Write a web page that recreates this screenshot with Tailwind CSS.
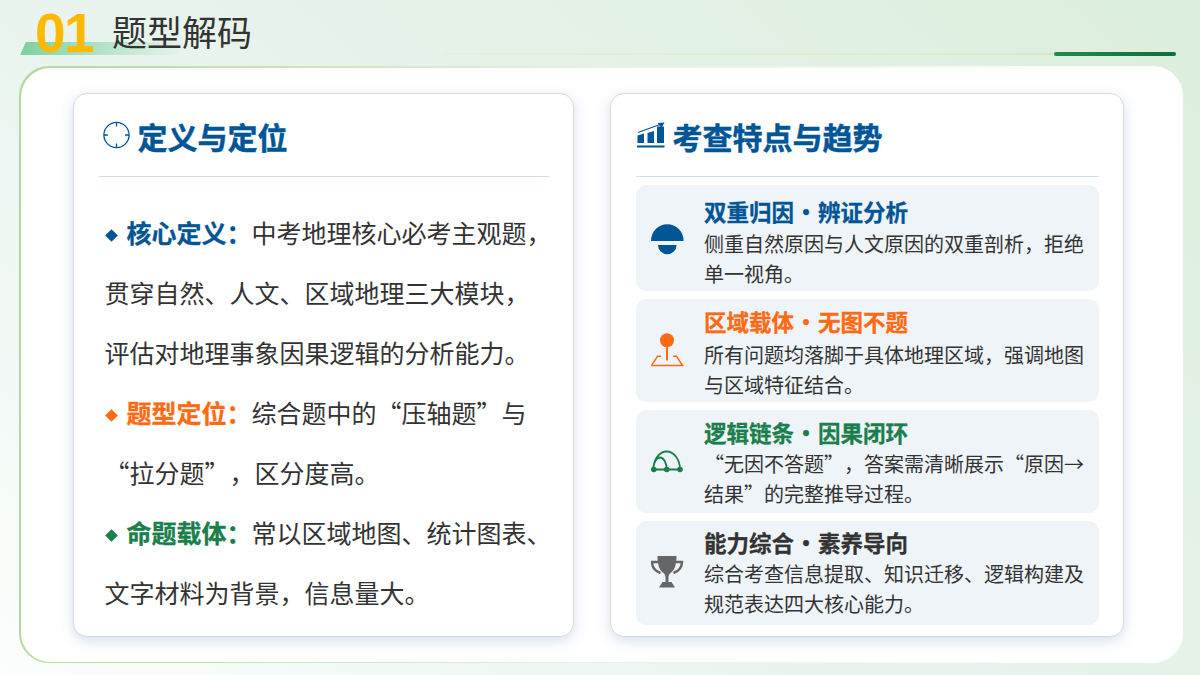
<!DOCTYPE html>
<html lang="zh-CN">
<head>
    <meta charset="UTF-8">
    <title>题型解码</title>
    <script src="https://cdn.jsdelivr.net/npm/@tailwindcss/browser@4"></script>
</head>
<body class="w-[1200px] h-[675px] overflow-hidden bg-[linear-gradient(40deg,#fbfefc_0%,#e9f4ef_40%,#dceedc_100%)] font-['Noto_Sans_CJK_SC','Noto_Sans',sans-serif] text-[#333333] [text-spacing-trim:space-all]">
    <!-- 顶部标题 -->
    <header class="relative h-[66px]">
        <div class="absolute left-[23px] top-[42px] w-[160px] h-[13px] -skew-x-[24deg] bg-gradient-to-r from-[#7fd1a0] to-transparent"></div>
        <div class="absolute left-[445px] top-[53px] w-[609px] h-[2px] bg-gradient-to-r from-[#e4f0dc] to-[#d6ebc8]"></div>
        <div class="absolute left-[1054px] top-[52px] w-[122px] h-[4px] rounded-full bg-gradient-to-r from-[#1f8a4c] to-[#0e6f3c]"></div>
        <div class="relative flex items-start pl-[35px]">
            <span class="font-['Liberation_Sans',sans-serif] font-bold text-[55px] tracking-[-0.03em] leading-[66px] text-[#fdb900]">01</span>
            <h1 class="ml-[19px] -mt-[2px] text-[35px] leading-[66px] text-[#333333]">题型解码</h1>
        </div>
    </header>

    <!-- 主面板 -->
    <main class="ml-[19px] w-[1164px] h-[597px] rounded-[30px] p-[1.5px] bg-gradient-to-r from-[#b4d99c] via-[#e8f2e0] to-white">
        <div class="h-full rounded-[29px] bg-white pl-[52.5px] pr-[57.5px] pt-[25.5px] grid grid-cols-[501px_514px] gap-[36px]">

            <!-- 左卡片 -->
            <section class="h-[544px] rounded-[14px] border-[1.5px] border-[#d8dade] bg-white shadow-[0_4px_14px_rgba(30,80,160,0.18)] px-[24.5px]">
                <div class="flex items-center h-[83px] border-b border-[#cfe0ea]">
                    <svg class="ml-[4px] w-[27px] h-[28px]" viewBox="0 0 27 28" fill="none" stroke="#005596" stroke-width="1.3">
                        <circle cx="13.5" cy="14" r="12.6"/>
                        <path d="M13.5 1.400v4M13.5 22.600v4M.9 14h4M22.100 14h4"/>
                    </svg>
                    <h2 class="ml-[8px] mt-[2px] text-[30px] font-bold text-[#005596] [-webkit-text-stroke:0.5px]">定义与定位</h2>
                </div>
                <div class="pt-[25px] pl-[6px] text-[25px] leading-[60px] whitespace-nowrap">
                    <p><span class="inline-block w-[9px] h-[9px] rotate-45 bg-[#005596] ml-[2.5px] mr-[10.5px] align-[3px]"></span><b class="text-[#005596] [-webkit-text-stroke:0.3px]">核心定义：</b><span>中考地理核心必考主观题，</span></p>
                    <p>贯穿自然、人文、区域地理三大模块，</p>
                    <p>评估对地理事象因果逻辑的分析能力。</p>
                    <p><span class="inline-block w-[9px] h-[9px] rotate-45 bg-[#ff6a13] ml-[2.5px] mr-[10.5px] align-[3px]"></span><b class="text-[#ff6a13] [-webkit-text-stroke:0.3px]">题型定位：</b><span>综合题中的“压轴题”与</span></p>
                    <p>“拉分题”，区分度高。</p>
                    <p><span class="inline-block w-[9px] h-[9px] rotate-45 bg-[#1a7f4b] ml-[2.5px] mr-[10.5px] align-[3px]"></span><b class="text-[#1a7f4b] [-webkit-text-stroke:0.3px]">命题载体：</b><span>常以区域地图、统计图表、</span></p>
                    <p>文字材料为背景，信息量大。</p>
                </div>
            </section>

            <!-- 右卡片 -->
            <section class="h-[544px] rounded-[14px] border-[1.5px] border-[#d8dade] bg-white shadow-[0_4px_14px_rgba(30,80,160,0.18)] px-[24.5px]">
                <div class="flex items-center h-[83px] border-b border-[#cfe0ea]">
                    <svg class="ml-[1px] w-[28px] h-[27px]" viewBox="0 0 28 27" fill="#005596">
                        <path d="M1 10.500L23 2.500" fill="none" stroke="#005596" stroke-width="1.200"/>
                        <path d="M20.500 1L27.500 .5 24.500 6z"/>
                        <path d="M.5 13.500L7 11.500V21H.5zM10.500 11L17 9V21H10.500zM20 4.500h7V21h-7zM0 23.500h27.500v2H0z"/>
                    </svg>
                    <h2 class="ml-[8px] mt-[2px] text-[30px] font-bold text-[#005596] [-webkit-text-stroke:0.5px]">考查特点与趋势</h2>
                </div>
                <div class="pt-[8px] flex flex-col gap-[8px]">
                    <div class="h-[106px] rounded-[10px] bg-[#eff4f9] flex items-center">
                        <svg class="ml-[15px] w-[34px] h-[34px] shrink-0" viewBox="0 0 34 34" fill="#005596">
                            <path d="M0 20a16.300 16.800 0 0 1 32.600 0z"/>
                            <path d="M7 24h18.600a9.300 9.300 0 0 1-18.600 0z"/>
                        </svg>
                        <div class="ml-[19.5px] pt-[9px] w-[389px]">
                            <h3 class="mb-[3px] text-[22.5px] leading-[30px] font-bold text-[#005596] [-webkit-text-stroke:0.3px]">双重归因<span class="inline-block w-[24px] text-center">•</span>辨证分析</h3>
                            <p class="text-[20px] leading-[30px]">侧重自然原因与人文原因的双重剖析，拒绝单一视角。</p>
                        </div>
                    </div>
                    <div class="h-[103px] rounded-[10px] bg-[#eff4f9] flex items-center">
                        <svg class="ml-[15px] w-[34px] h-[36px] shrink-0" viewBox="0 0 34 36" fill="none" stroke="#ff6a13" stroke-width="1.500">
                            <circle cx="16" cy="7.200" r="7" fill="#ff6a13" stroke="none"/>
                            <path d="M16 12v15.500" stroke-width="2"/>
                            <path d="M10 23.200H6.500L.5 32.500h31L25.500 23.200H22"/>
                        </svg>
                        <div class="ml-[19.5px] pt-[4px] w-[389px]">
                            <h3 class="mb-[4px] text-[22.5px] leading-[30px] font-bold text-[#ff6a13] [-webkit-text-stroke:0.3px]">区域载体<span class="inline-block w-[24px] text-center">•</span>无图不题</h3>
                            <p class="text-[20px] leading-[30px]">所有问题均落脚于具体地理区域，强调地图与区域特征结合。</p>
                        </div>
                    </div>
                    <div class="h-[103px] rounded-[10px] bg-[#eff4f9] flex items-center">
                        <svg class="ml-[15px] w-[34px] h-[24px] shrink-0" viewBox="0 0 34 24" fill="none" stroke="#1a7f4b" stroke-width="1.800">
                            <path d="M2.300 19.500A13.350 18 0 0 1 29 19.500M2.300 19.500A6.700 12 0 0 1 15.700 19.500M2.300 19.500H29"/>
                            <circle cx="2.800" cy="19.500" r="2.800" fill="#1a7f4b" stroke="none"/>
                            <circle cx="15.700" cy="19.500" r="2.800" fill="#1a7f4b" stroke="none"/>
                            <circle cx="29" cy="19.500" r="2.800" fill="#1a7f4b" stroke="none"/>
                        </svg>
                        <div class="ml-[19.5px] pt-[2px] w-[389px]">
                            <h3 class="mb-[2px] text-[22.5px] leading-[30px] font-bold text-[#1a7f4b] [-webkit-text-stroke:0.3px]">逻辑链条<span class="inline-block w-[24px] text-center">•</span>因果闭环</h3>
                            <p class="text-[20px] leading-[30px]">“无因不答题”，答案需清晰展示“原因→结果”的完整推导过程。</p>
                        </div>
                    </div>
                    <div class="h-[104px] rounded-[10px] bg-[#eff4f9] flex items-center">
                        <svg class="ml-[15px] w-[34px] h-[34px] shrink-0" viewBox="0 0 34 34" fill="#666666">
                            <path d="M6.500 0H25.500C25.500 8 24 14 19.500 17 18 18 17.500 20 17.500 22V26H14.500V22C14.500 20 14 18 12.500 17 8 14 6.500 8 6.500 0z"/>
                            <path d="M11.500 26h9l3.500 5.500H8z"/>
                            <path d="M7 6H1c0 5 3 9 8.500 11M25 6h6c0 5-3 9-8.500 11" fill="none" stroke="#666666" stroke-width="2.400"/>
                        </svg>
                        <div class="ml-[19.5px] w-[389px]">
                            <h3 class="mb-[2px] text-[22.5px] leading-[30px] font-bold text-[#333333] [-webkit-text-stroke:0.3px]">能力综合<span class="inline-block w-[24px] text-center">•</span>素养导向</h3>
                            <p class="text-[20px] leading-[30px]">综合考查信息提取、知识迁移、逻辑构建及规范表达四大核心能力。</p>
                        </div>
                    </div>
                </div>
            </section>
        </div>
    </main>
</body>
</html>
